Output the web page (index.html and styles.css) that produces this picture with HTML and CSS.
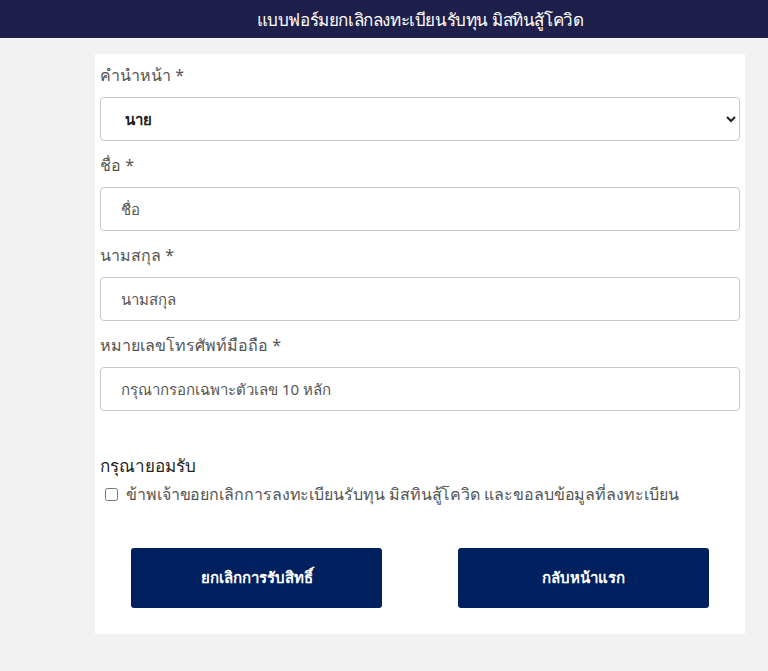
FILE: index.html
```html
<!DOCTYPE html>
<html lang="th">
<head>
    <meta charset="utf-8">
    <title>แบบฟอร์มยกเลิกลงทะเบียนรับทุน มิสทินสู้โควิด</title>
    <link rel="stylesheet" href="styles.css">
</head>
<body>
    <header class="topbar">
        <h1>แบบฟอร์มยกเลิกลงทะเบียนรับทุน มิสทินสู้โควิด</h1>
    </header>

    <main class="form-card">
        <div class="field">
            <label for="prefix">คำนำหน้า *</label>
            <select id="prefix" class="control control-select">
                <option>นาย</option>
                <option>นาง</option>
                <option>นางสาว</option>
            </select>
        </div>
        <div class="field">
            <label for="fname">ชื่อ *</label>
            <input type="text" id="fname" class="control" placeholder="ชื่อ">
        </div>
        <div class="field">
            <label for="lname">นามสกุล *</label>
            <input type="text" id="lname" class="control" placeholder="นามสกุล">
        </div>
        <div class="field">
            <label for="phone">หมายเลขโทรศัพท์มือถือ *</label>
            <input type="text" id="phone" class="control" placeholder="กรุณากรอกเฉพาะตัวเลข 10 หลัก">
        </div>

        <div class="consent">
            <h2>กรุณายอมรับ</h2>
            <label class="check-row">
                <input type="checkbox">
                <span>ข้าพเจ้าขอยกเลิกการลงทะเบียนรับทุน มิสทินสู้โควิด และขอลบข้อมูลที่ลงทะเบียน</span>
            </label>
        </div>

        <div class="actions">
            <button class="btn">ยกเลิกการรับสิทธิ์</button>
            <button class="btn">กลับหน้าแรก</button>
        </div>
    </main>
</body>
</html>
```

FILE: styles.css
```css
body {
    margin: 0;
    background-color: #f2f2f2;
    font-family: "Noto Sans", "Liberation Sans", sans-serif;
    color: #333;
}
.topbar {
    height: 38px;
    background-color: #1f1f4b;
    display: flex;
    align-items: center;
    justify-content: center;
    padding-left: 72px;
}
.topbar h1 {
    margin: 0;
    color: #fff;
    font-size: 17px;
    letter-spacing: -0.4px;
    font-weight: normal;
}
.form-card {
    width: 640px;
    margin: 16px 0 0 95px;
    padding: 9px 5px 26px 5px;
    background-color: #fff;
}
.field {
    display: flex;
    flex-direction: column;
}
.field label {
    font-size: 16px;
    line-height: 24px;
    color: #555;
    margin-bottom: 10px;
}
.field + .field {
    margin-top: 12px;
}
.control {
    height: 44px;
    box-sizing: border-box;
    border: 1px solid #c8c8c8;
    border-radius: 4px;
    padding: 0 20px;
    font-family: "Noto Sans", "Liberation Sans", sans-serif;
    font-size: 15px;
    color: #222;
    background-color: #fff;
}
.control::placeholder {
    color: #555;
}
.control-select {
    font-weight: bold;
    padding-left: 20px;
}
.consent {
    margin-top: 41px;
}
.consent h2 {
    margin: 0 0 3px 0;
    font-size: 17px;
    font-weight: 500;
    color: #222;
}
.check-row {
    display: flex;
    align-items: center;
    gap: 8px;
    font-size: 16px;
    letter-spacing: -0.08px;
    color: #555;
}
.check-row input {
    margin: 0 0 0 5px;
    width: 13px;
    height: 13px;
}
.actions {
    display: flex;
    justify-content: space-between;
    padding: 0 31px;
    margin-top: 41px;
}
.btn {
    width: 251px;
    height: 60px;
    border: none;
    border-radius: 3px;
    background-color: #012060;
    color: #fff;
    font-size: 15px;
    font-weight: bold;
    font-family: "Noto Sans", "Liberation Sans", sans-serif;
}
```
